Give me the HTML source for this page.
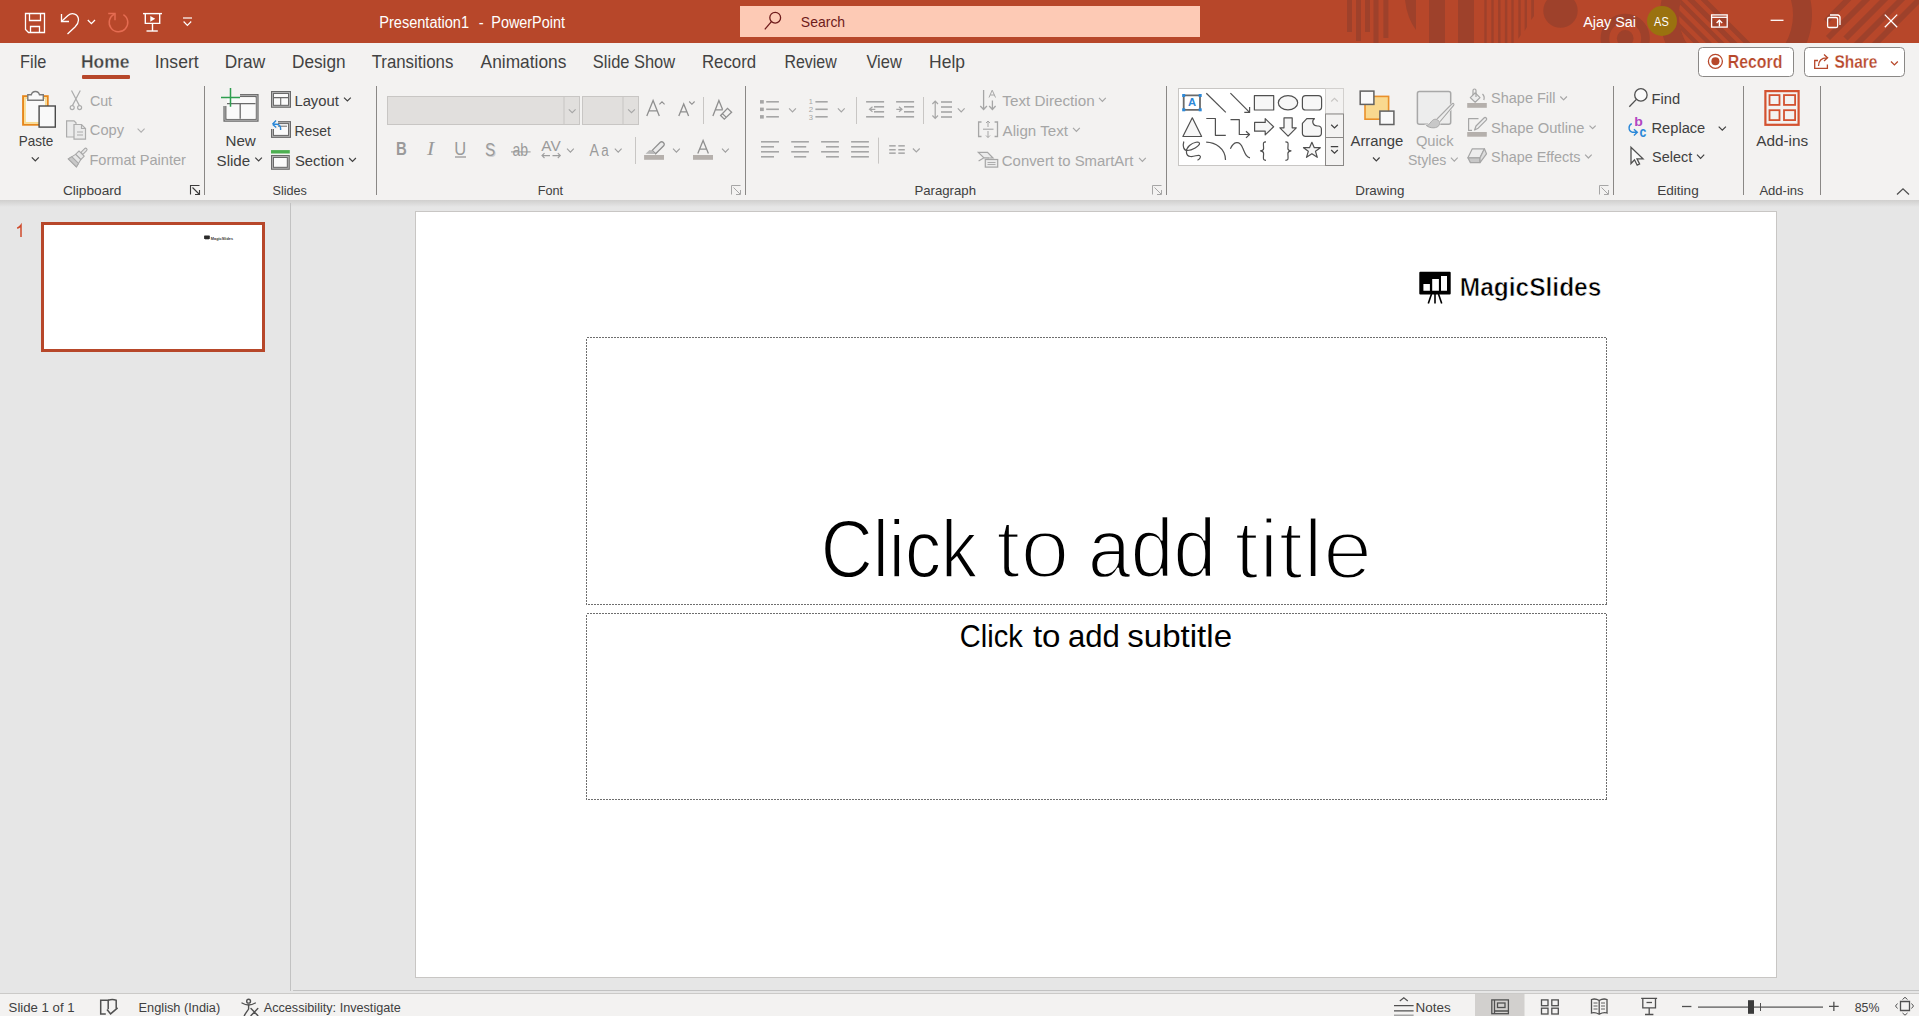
<!DOCTYPE html>
<html><head><meta charset="utf-8"><style>
html,body{margin:0;padding:0;width:1919px;height:1016px;overflow:hidden;background:#E6E6E6;}
body{position:relative;font-family:'Liberation Sans',sans-serif;}
.b{position:absolute;}
svg.ov{position:absolute;left:0;top:0;}
svg.ov text{white-space:pre;}
</style></head><body>
<div class="b" style="left:0;top:0;width:1919px;height:43px;background:#B7472A"></div>
<div class="b" style="left:0;top:43px;width:1919px;height:157px;background:#F3F2F1"></div>
<div class="b" style="left:0;top:200px;width:1919px;height:7px;background:linear-gradient(#D0CFCE,#E6E6E6)"></div>
<div class="b" style="left:290px;top:203px;width:1px;height:788px;background:#C2C2C2"></div>
<div class="b" style="left:293px;top:990px;width:1626px;height:1px;background:#C2C2C2"></div>
<div class="b" style="left:0;top:993px;width:1919px;height:1px;background:#CBCAC8"></div>
<div class="b" style="left:0;top:994px;width:1919px;height:22px;background:#F3F2F1"></div>
<div class="b" style="left:415px;top:211px;width:1360px;height:765px;background:#fff;border:1px solid #C8C6C4"></div>
<div class="b" style="left:41px;top:222px;width:218px;height:124px;background:#fff;border:3px solid #B7472A"></div>
<div class="b" style="left:82px;top:75px;width:48px;height:4px;background:#B7472A;border-radius:1px"></div>

<svg class="ov" width="1919" height="1016" viewBox="0 0 1919 1016">
<defs>
<clipPath id="tbclip"><rect x="0" y="0" width="1919" height="43"/></clipPath>
<clipPath id="ringin"><circle cx="1736" cy="15" r="57"/></clipPath>
</defs>
<g clip-path="url(#tbclip)" fill="#9E412B">
<rect x="1347" y="0" width="5" height="32"/>
<rect x="1356" y="0" width="5" height="41"/>
<rect x="1365" y="0" width="5" height="32"/>
<rect x="1373.5" y="0" width="5" height="43"/>
<rect x="1383.4" y="0" width="5" height="38"/>
<path d="M1405,0 Q1407,18 1416,30 L1416,0 Z"/>
<rect x="1429" y="0" width="16" height="43"/>
<rect x="1458" y="0" width="16" height="43"/>
<rect x="1484.3" y="0" width="2.4" height="43"/>
<rect x="1491.3" y="0" width="2.4" height="43"/>
<rect x="1498.1" y="0" width="2.4" height="43"/>
<rect x="1504.9" y="0" width="2.4" height="43"/>
<rect x="1511.3" y="0" width="2.4" height="43"/>
<path d="M1518.3,0 h2.4 v35 l-2.4,4 Z"/>
<path d="M1524.6,0 h2.4 v27 l-2.4,4 Z"/>
<path d="M1531.2,0 h2.8 v16 l-2.8,4 Z"/>
<circle cx="1560.5" cy="10.6" r="17.2"/>
<path fill-rule="evenodd" d="M1625.2,13.7 a24.6,24.6 0 1,0 0.01,0 Z M1625.2,22.3 a16,16 0 1,0 0.01,0 Z"/>
<circle cx="1625.2" cy="38.3" r="8.3"/>
<path fill-rule="evenodd" d="M1736,-61 a76,76 0 1,0 0.01,0 Z M1736,-42 a57,57 0 1,0 0.01,0 Z"/>
<g clip-path="url(#ringin)">
<polygon points="1600,-10 1697.5,-10 1760.5,53 1600,53"/>
<g fill="#B7472A">
<polygon points="1684.5,-10 1690.7,-10 1753.7,53 1747.5,53"/>
<polygon points="1671.5,-10 1677.2,-10 1740.2,53 1734.5,53"/>
<polygon points="1659,-10 1665.5,-10 1728.5,53 1722,53"/>
<polygon points="1646.5,-10 1653,-10 1716,53 1709.5,53"/>
<polygon points="1634,-10 1640.5,-10 1703.5,53 1697,53"/>
</g></g>
<g stroke="#9E412B" stroke-width="5.8" fill="none">
<line x1="1826" y1="21.4" x2="1849.4" y2="-2"/>
<line x1="1828" y1="38" x2="1868" y2="-2"/>
<line x1="1845.5" y1="38.5" x2="1886" y2="-2"/>
<line x1="1855" y1="46" x2="1903" y2="-2"/>
<line x1="1873" y1="46" x2="1921" y2="-2"/>
</g>
</g>
<!-- avatar -->
<circle cx="1662" cy="21" r="15" fill="#9A720F"/>
<!-- search box -->
<rect x="740" y="6" width="460" height="31" fill="#FDCAB5"/>
<g stroke="#6E1B1B" stroke-width="1.3" fill="none">
<circle cx="775.2" cy="17.7" r="5.4"/>
<line x1="771.4" y1="21.6" x2="764.8" y2="29.4"/>
</g>
<!-- QAT -->
<g stroke="#fff" stroke-width="1.3" fill="none">
<path d="M25.5,13.5 H44.5 V32.5 H28.5 L25.5,29.5 Z"/>
<path d="M29.5,13.5 V20.5 H40.5 V13.5"/>
<path d="M30.5,32.5 V26.5 H39.5 V32.5"/>
<path d="M61.5,14 V21.5 H69"/>
<path d="M62,21 L68,15.5 C72,12 78.5,14 78.5,20 C78.5,23 77,25 75,27 L67.5,34"/>
<path d="M87.8,20 L91.4,23.6 L95,20"/>
</g>
<g stroke="#E56C52" stroke-width="1.5" fill="none">
<path d="M123.4,14.6 A9.3,9.3 0 1 1 114.3,14.2"/>
<path d="M108.2,13.6 H115 V20.3"/>
</g>
<g stroke="#fff" stroke-width="1.4" fill="none">
<path d="M143,13.6 H162"/>
<path d="M145.3,13.6 V23.4 H159.7 V13.6"/>
<path d="M152.5,23.4 V31"/>
<path d="M146.5,31 H157.8"/>
</g>
<path d="M150.3,15.9 L155.2,18.8 L150.3,21.7 Z" fill="#fff"/>
<g stroke="#fff" stroke-width="1.2" fill="none">
<path d="M183,18 H192"/>
<path d="M183.6,21.5 L187.4,25.3 L191.2,21.5"/>
</g>
<!-- window controls -->
<g stroke="#fff" stroke-width="1.3" fill="none">
<rect x="1711.6" y="14.9" width="15.6" height="12.2"/>
<path d="M1712,17.3 H1727"/>
<path d="M1719.4,26.5 V20.5 M1716.6,23 L1719.4,20.2 L1722.2,23"/>
<path d="M1770.6,20.3 H1783.5"/>
<rect x="1827.6" y="17.5" width="10" height="10" rx="1.6"/>
<path d="M1830,15 H1837.5 A2.4,2.4 0 0 1 1840,17.5 V25"/>
<path d="M1884.8,14.6 L1897.2,27.2 M1897.2,14.6 L1884.8,27.2"/>
</g>
<!-- separators -->
<g fill="#8A8886">
<rect x="204" y="86" width="1" height="109"/>
<rect x="376" y="86" width="1" height="109"/>
<rect x="745" y="86" width="1" height="109"/>
<rect x="1166" y="86" width="1" height="109"/>
<rect x="1613" y="86" width="1" height="109"/>
<rect x="1743" y="86" width="1" height="109"/>
<rect x="1820" y="86" width="1" height="109"/>
</g>
<!-- Paste -->
<rect x="23.1" y="96.2" width="24.6" height="28.5" fill="#F9F9F9" stroke="#E6871C" stroke-width="2"/>
<rect x="25" y="98.1" width="20.8" height="24.7" fill="none" stroke="#F9DC8E" stroke-width="1.7"/>
<path d="M27.8,100.2 V94.8 H31.3 A4.2,4.2 0 0 1 39.5,94.8 H43.3 V100.2 Z" fill="#F9F9F9" stroke="#7A7A7A" stroke-width="1.4"/>
<rect x="39.1" y="106" width="16.2" height="21.1" fill="#F9F9F9" stroke="#4A4A4A" stroke-width="1.4"/>
<path d="M31.8,157.4 L35.3,160.9 L38.8,157.4" stroke="#404040" stroke-width="1.3" fill="none"/>
<!-- Cut -->
<g stroke="#ACACAC" stroke-width="1.2" fill="none">
<path d="M71.5,90.5 L79.4,105.6 M80.3,90.5 L72.4,105.6"/>
<circle cx="72.2" cy="107.6" r="2"/>
<circle cx="79.6" cy="107.6" r="2"/>
</g>
<!-- Copy -->
<g stroke="#ACACAC" stroke-width="1.2" fill="#EBEBEB">
<path d="M66.6,137 V120.8 H74 L76,122.8 V137 Z"/>
<path d="M74,139.1 V124.5 H81.5 L85.5,128.5 V139.1 Z"/>
<path d="M81.5,124.5 V128.5 H85.5" fill="none"/>
<path d="M77,132 H83 M77,135 H83" fill="none"/>
</g>
<!-- Format painter -->
<g transform="translate(77.6,157.6) rotate(45) scale(0.88)" stroke="#A8A8A8" stroke-width="1.2" fill="#E6E6E6" stroke-linejoin="round">
<rect x="-1.6" y="-14.5" width="3.2" height="8" rx="1.6"/>
<rect x="-4.2" y="-6.5" width="8.4" height="5.5"/>
<path d="M-4.2,-1 H4.2 L6.5,8.5 H-6.5 Z"/>
<path d="M-5.4,4 H5.4 L6.5,8.5 H-6.5 Z" fill="#C8C8C8"/>
</g>
<!-- launcher icons -->
<g stroke="#3B3B3B" stroke-width="1.1" fill="none">
<path d="M190.5,194.5 V185.5 H199.5 M192.5,187.5 L199,194 M199.5,190 V194.5 H195"/>
</g>
<g stroke="#A6A6A6" stroke-width="1" fill="none">
<path d="M731.5,194.5 V185.5 H740.5 M733.5,187.5 L740,194 M740.5,190 V194.5 H736"/>
<path d="M1152.5,194.5 V185.5 H1161.5 M1154.5,187.5 L1161,194 M1161.5,190 V194.5 H1157"/>
<path d="M1599.5,194.5 V185.5 H1608.5 M1601.5,187.5 L1608,194 M1608.5,190 V194.5 H1604"/>
</g>
<!-- New slide -->
<g fill="none">
<path d="M240,95.4 H257.1 V120.3 H224.9 V106" stroke="#6A6A6A" stroke-width="3"/>
<path d="M240,95.4 H257.1 V120.3 H224.9 V106" stroke="#B0B0B0" stroke-width="1"/>
<rect x="227" y="98" width="28.5" height="20.8" fill="#FAFAFA" stroke="none"/>
<path d="M227,103.6 H255.5 M240.2,103.6 V118.8" stroke="#6A6A6A" stroke-width="1.3"/>
<path d="M221,97.4 H240 M230.5,88.1 V106.7" stroke="#2E9E4F" stroke-width="1.5"/>
</g>
<path d="M255.3,157.7 L258.6,161 L261.9,157.7" stroke="#404040" stroke-width="1.2" fill="none"/>
<!-- Layout -->
<g fill="none">
<rect x="272.5" y="92.5" width="17" height="13.8" stroke="#6A6A6A" stroke-width="3" fill="#FAFAFA"/>
<rect x="272.5" y="92.5" width="17" height="13.8" stroke="#B0B0B0" stroke-width="1"/>
<path d="M274,97.6 H288 M280.7,97.6 V105" stroke="#6A6A6A" stroke-width="1.1"/>
</g>
<path d="M344,97.6 L347.4,101 L350.8,97.6" stroke="#404040" stroke-width="1.2" fill="none"/>
<!-- Reset -->
<g fill="none">
<rect x="272.5" y="122.6" width="17" height="13.8" stroke="#6A6A6A" stroke-width="3" fill="#FAFAFA"/>
<rect x="272.5" y="122.6" width="17" height="13.8" stroke="#B0B0B0" stroke-width="1"/>
<path d="M278,126.2 H287" stroke="#6A6A6A" stroke-width="1"/>
<rect x="270" y="120" width="8" height="9" fill="#F3F2F1" stroke="none"/>
<path d="M272.5,124.3 L276,120.6 M272.5,124.3 L276.2,127.5 M272.8,124.3 H276.5 A4,4 0 0 1 280.6,128.5 V130" stroke="#2B88D8" stroke-width="1.4"/>
</g>
<!-- Section -->
<rect x="271" y="150.1" width="18.8" height="3.4" fill="#4CAF50"/>
<rect x="272.5" y="156.5" width="15.8" height="11.8" stroke="#6A6A6A" stroke-width="3" fill="#FAFAFA"/>
<rect x="272.5" y="156.5" width="15.8" height="11.8" stroke="#B0B0B0" stroke-width="1" fill="none"/>
<path d="M349.1,158 L352.5,161.4 L355.9,158" stroke="#404040" stroke-width="1.2" fill="none"/>
<path d="M137.6,128.6 L141.1,132.1 L144.6,128.6" stroke="#B0B0B0" stroke-width="1.1" fill="none"/>
<!-- Font name/size boxes -->
<rect x="387.5" y="96.5" width="192" height="28" fill="#E1DFDD" stroke="#C8C6C4" stroke-width="1"/>
<rect x="563.5" y="97" width="1" height="27" fill="#C8C6C4"/>
<rect x="582.5" y="96.5" width="56" height="28" fill="#E1DFDD" stroke="#C8C6C4" stroke-width="1"/>
<rect x="622.5" y="97" width="1" height="27" fill="#C8C6C4"/>
<g stroke="#A6A6A6" stroke-width="1.1" fill="none">
<path d="M568.8,109.3 L572.2,112.7 L575.6,109.3"/>
<path d="M628.1,109.3 L631.5,112.7 L634.9,109.3"/>
</g>
<g stroke="#8F8F8F" stroke-width="1.3" fill="none" stroke-linejoin="miter">
<path d="M646.8,116 L653.1,100.5 L659.3,116 M648.8,110.8 H657.3"/>
<path d="M659.4,104.4 L662,101.8 L664.6,104.4" stroke-width="1.1"/>
<path d="M678.8,116 L683.7,103.9 L688.6,116 M680.5,111.8 H687"/>
<path d="M689.2,101.5 L691.9,104.3 L694.6,101.5" stroke-width="1.1"/>
<path d="M712.9,116 L718.9,100.5 L722.6,109.5 M715.3,109.8 H722.8"/>
<path d="M720.6,115.5 L727.5,108.4 L731.6,112.3 L724.3,119.2 Z M722.4,113.6 L726.3,117.4"/>
</g>
<rect x="703" y="97" width="1" height="27" fill="#C8C6C4"/>
<rect x="635" y="137" width="1" height="27" fill="#C8C6C4"/>
<!-- strike / AV / Aa details -->
<g stroke="#9E9E9E" stroke-width="1.1" fill="none">
<path d="M455,157 H466" stroke-width="1.4"/>
<path d="M511,151.9 H530.6"/>
<path d="M542,155.6 H550 M544.5,153.2 L542,155.6 L544.5,158 M552.5,155.6 H560.3 M557.8,153.2 L560.3,155.6 L557.8,158"/>
<path d="M567,148.7 L570.4,152.1 L573.8,148.7"/>
<path d="M614.8,148.7 L618.2,152.1 L621.6,148.7"/>
</g>
<!-- highlighter & font color -->
<g stroke="#8F8F8F" stroke-width="1.3" fill="#EBEBEB">
<path d="M652.2,150.4 L660.3,142.3 A1.9,1.9 0 0 1 663,142.3 L663.7,143 A1.9,1.9 0 0 1 663.7,145.7 L655.6,153.8 Z"/>
</g>
<path d="M645.5,153.8 L649.5,150 L652.3,150.5 L655.3,153.5 L654.5,153.9 Z" fill="#B8B8B8"/>
<rect x="644.1" y="155" width="19.9" height="4.8" fill="#B5B0AC"/>
<g stroke="#8F8F8F" stroke-width="1.3" fill="none">
<path d="M697.8,153.6 L703.1,140.5 L708.4,153.6 M699.6,149.1 H706.6"/>
</g>
<rect x="693" y="155" width="20" height="4.8" fill="#B5B0AC"/>
<g stroke="#9E9E9E" stroke-width="1.1" fill="none">
<path d="M673,148.7 L676.4,152.1 L679.8,148.7"/>
<path d="M722,148.7 L725.4,152.1 L728.8,148.7"/>
</g>
<!-- Paragraph -->
<g fill="#A6A6A6">
<rect x="760" y="100.1" width="3.8" height="3.5"/>
<rect x="760" y="107.6" width="3.8" height="3.5"/>
<rect x="760" y="115.1" width="3.8" height="3.5"/>
<rect x="766.2" y="101" width="12.7" height="1.6"/>
<rect x="766.2" y="108.5" width="12.7" height="1.6"/>
<rect x="766.2" y="116" width="12.7" height="1.6"/>
<rect x="815.4" y="101" width="12.3" height="1.6"/>
<rect x="815.4" y="108.5" width="12.3" height="1.6"/>
<rect x="815.4" y="116" width="12.3" height="1.6"/>
<!-- indents -->
<rect x="866.1" y="101" width="18" height="1.6"/>
<rect x="874" y="106" width="10.1" height="1.6"/>
<rect x="874" y="111" width="10.1" height="1.6"/>
<rect x="866.1" y="116" width="18" height="1.6"/>
<rect x="896.1" y="101" width="18" height="1.6"/>
<rect x="904" y="106" width="10.1" height="1.6"/>
<rect x="904" y="111" width="10.1" height="1.6"/>
<rect x="896.1" y="116" width="18" height="1.6"/>
<!-- line spacing lines -->
<rect x="941" y="101.2" width="11" height="1.6"/>
<rect x="941" y="106.2" width="11" height="1.6"/>
<rect x="941" y="111.2" width="11" height="1.6"/>
<rect x="941" y="116.2" width="11" height="1.6"/>
<!-- align rows -->
<rect x="761" y="141" width="18" height="1.6"/><rect x="761" y="146" width="13" height="1.6"/><rect x="761" y="151" width="18" height="1.6"/><rect x="761" y="156" width="13" height="1.6"/>
<rect x="791.2" y="141" width="17.7" height="1.6"/><rect x="794" y="146" width="12.2" height="1.6"/><rect x="791.2" y="151" width="17.7" height="1.6"/><rect x="794" y="156" width="12.2" height="1.6"/>
<rect x="821.1" y="141" width="17.8" height="1.6"/><rect x="826" y="146" width="12.9" height="1.6"/><rect x="821.1" y="151" width="17.8" height="1.6"/><rect x="826" y="156" width="12.9" height="1.6"/>
<rect x="851.1" y="141" width="17.8" height="1.6"/><rect x="851.1" y="146" width="17.8" height="1.6"/><rect x="851.1" y="151" width="17.8" height="1.6"/><rect x="851.1" y="156" width="17.8" height="1.6"/>
<!-- columns -->
<rect x="889.2" y="145.1" width="6.5" height="1.5"/><rect x="889.2" y="149" width="6.5" height="1.5"/><rect x="889.2" y="152.4" width="6.5" height="1.5"/>
<rect x="898.3" y="145.1" width="6.5" height="1.5"/><rect x="898.3" y="149" width="6.5" height="1.5"/><rect x="898.3" y="152.4" width="6.5" height="1.5"/>
</g>
<g fill="#C8C6C4">
<rect x="856" y="97" width="1" height="27"/>
<rect x="923" y="97" width="1" height="27"/>
<rect x="878" y="137.6" width="1" height="26"/>
</g>
<g stroke="#A6A6A6" stroke-width="1.2" fill="none">
<path d="M789.1,108.4 L792.5,111.8 L795.9,108.4"/>
<path d="M837.9,108.4 L841.3,111.8 L844.7,108.4"/>
<path d="M957.8,108.4 L961.2,111.8 L964.6,108.4"/>
<path d="M912.9,148.5 L916.3,151.9 L919.7,148.5"/>
<path d="M872.5,106.8 L869.5,109.3 L872.5,111.8 M869.7,109.3 H875.3"/>
<path d="M899,106.8 L902,109.3 L899,111.8 M896.3,109.3 H901.8"/>
<path d="M935.2,101.5 V118 M932.4,104 L935.2,101.2 L938,104 M932.4,115.5 L935.2,118.3 L938,115.5"/>
<path d="M1099,97.9 L1102.4,101.3 L1105.8,97.9"/>
<path d="M1073,127.9 L1076.4,131.3 L1079.8,127.9"/>
<path d="M1139,157.9 L1142.4,161.3 L1145.8,157.9"/>
</g>
<!-- text direction icon -->
<g stroke="#A6A6A6" stroke-width="1.3" fill="none">
<path d="M983.6,90 V109.5 M980.3,106 L983.6,109.5 L986.9,106"/>
<path d="M992.4,100.5 V109.5 M989.2,106 L992.4,109.5 L995.6,106"/>
<path d="M989,97.5 L992.2,90.2 L995.5,97.5 M990.3,95 H994.3" stroke-width="1"/>
</g>
<!-- align text icon -->
<g stroke="#A6A6A6" stroke-width="1.3" fill="none">
<path d="M981.5,122 H978.6 V136.5 H981.5 M994.6,122 H997.5 V136.5 H994.6"/>
<path d="M983,129.2 H993.5" stroke-width="1.1"/>
<path d="M988,121 V127 M986,123 L988,121 L990,123 M988,131 V137.5 M986,135.5 L988,137.5 L990,135.5" stroke-width="1"/>
</g>
<!-- smartart icon -->
<g stroke="#A6A6A6" stroke-width="1.2" fill="#EBEBEB">
<path d="M978.3,152.3 H987.5 L993,158 H984 Z"/>
<path d="M978.6,161 L983.5,158 H989"/>
<rect x="985.3" y="159.5" width="12.4" height="7.6"/>
<path d="M987.5,162.5 H995.5 M987.5,164.5 H995.5" fill="none" stroke-width="0.9"/>
</g>
<!-- shape gallery -->
<rect x="1178.5" y="88.5" width="147" height="77" fill="#FFFFFF" stroke="#C8C6C4" stroke-width="1"/>
<rect x="1325.5" y="88.5" width="18" height="25.5" fill="#F3F2F1" stroke="#D2D0CE" stroke-width="1"/>
<rect x="1325.5" y="114" width="18" height="23.5" fill="#F3F2F1" stroke="#8A8886" stroke-width="1"/>
<rect x="1325.5" y="137.5" width="18" height="28" fill="#F3F2F1" stroke="#8A8886" stroke-width="1"/>
<g stroke="#C8C6C4" stroke-width="1.1" fill="none"><path d="M1331.2,101.5 L1334.5,98.3 L1337.8,101.5"/></g>
<g stroke="#404040" stroke-width="1.2" fill="none">
<path d="M1331.2,124.8 L1334.5,128 L1337.8,124.8"/>
<path d="M1330.8,146.6 H1338.2 M1331.2,150 L1334.5,153.2 L1337.8,150"/>
</g>
<g stroke="#505050" stroke-width="1.2" fill="none" stroke-linejoin="round">
<!-- row1 -->
<rect x="1183.7" y="95.3" width="16.3" height="14.5" stroke="#6A6A6A" stroke-width="1.8"/>
<path d="M1206.3,93.2 L1225.8,112.4"/>
<path d="M1230.4,93.2 L1249.6,112.4 M1249.6,107 V112.4 H1244.3"/>
<rect x="1254.4" y="95.7" width="19.3" height="14.3" fill="#F7F7F7"/>
<ellipse cx="1288" cy="102.8" rx="9.7" ry="7.1" fill="#F7F7F7"/>
<rect x="1302.4" y="95.7" width="19.2" height="14.3" rx="3.3" fill="#F7F7F7"/>
<!-- row2 -->
<path d="M1182.9,136.5 L1192.3,117.8 L1201.6,136.5 Z" fill="#F7F7F7"/>
<path d="M1206.3,118.5 H1215.4 V135.3 H1225.8"/>
<path d="M1230.5,119.6 H1239.3 V134.5 H1249.5 M1246,131.2 L1249.5,134.5 L1246,137.9"/>
<path d="M1254.6,122.4 H1265.2 V118.6 L1273.6,126.8 L1265.2,134.9 V131.2 H1254.6 Z" fill="#F7F7F7"/>
<path d="M1284,117.9 H1292.2 V127.8 H1296.3 L1288.1,136.2 L1279.9,127.8 H1284 Z" fill="#F7F7F7"/>
<path d="M1302.4,123.4 L1306.8,118.7 H1314.4 C1311.5,120.7 1312.5,126 1317.5,126 H1318.3 A3,3 0 0 1 1321.4,129 V133.3 A3,3 0 0 1 1318.3,136.4 H1305.5 A3,3 0 0 1 1302.4,133.3 Z" fill="#F7F7F7"/>
<!-- row3 -->
<path d="M1183.8,141.5 C1182.5,146 1183.5,150.5 1187.5,150.5 C1192,150.5 1199.5,146 1199.5,143.5 C1199.5,141 1193.5,142 1189.5,145.5 C1185.5,149 1185,156 1190.5,156.5 C1194.5,157 1197.5,154.5 1199.5,155.5 C1201.5,156.5 1200,159 1197.5,160.3"/>
<path d="M1206.2,142.2 C1215,142.5 1225.5,148 1225.5,160"/>
<path d="M1230.4,148.8 C1233.5,141.5 1239.5,140 1242.7,148 C1245.3,154 1246.5,157.5 1250,157.8"/>
<path d="M1266,141.9 C1262.3,141.9 1263.6,144 1263.6,148.5 C1263.6,150.4 1262.3,150.7 1260.5,150.9 C1262.3,151.2 1263.6,151.5 1263.6,153.4 C1263.6,158 1262.3,160.3 1266,160.3"/>
<path d="M1285.4,141.9 C1289.2,141.9 1287.9,144 1287.9,148.5 C1287.9,150.4 1289.2,150.7 1291,150.9 C1289.2,151.2 1287.9,151.5 1287.9,153.4 C1287.9,158 1289.2,160.3 1285.4,160.3"/>
<path d="M1311.9,142.3 L1314.3,147.7 L1320.3,147.7 L1315.5,151.3 L1317.3,157.3 L1311.9,153.7 L1306.5,157.3 L1308.3,151.3 L1303.5,147.7 L1309.5,147.7 Z" fill="#F7F7F7"/>
</g>
<g fill="#2B88D8">
<rect x="1182.2" y="94" width="3" height="3"/>
<rect x="1198.7" y="94" width="3" height="3"/>
<rect x="1182.2" y="108.3" width="3" height="3"/>
<rect x="1198.7" y="108.3" width="3" height="3"/>
</g>
<!-- Arrange -->
<rect x="1365" y="96.4" width="23.6" height="22.8" fill="#F9D98F" stroke="#E9902A" stroke-width="1.6"/>
<rect x="1360.2" y="91.1" width="13.7" height="13.3" fill="#F9F9F9" stroke="#626262" stroke-width="1.5"/>
<rect x="1379.9" y="111.1" width="14" height="13.4" fill="#F9F9F9" stroke="#626262" stroke-width="1.5"/>
<path d="M1373,157.5 L1376.3,160.8 L1379.6,157.5" stroke="#404040" stroke-width="1.2" fill="none"/>
<!-- Quick styles -->
<rect x="1417.4" y="91.4" width="33.3" height="32.9" rx="2" fill="#EDEDED" stroke="#A8A8A8" stroke-width="1.5"/>
<path d="M1436.5,119.5 L1451.8,104 C1453.3,102.8 1454.6,103.6 1453.6,105.4 L1439.5,122.3 Z" fill="#EDEDED" stroke="#F3F2F1" stroke-width="2.2"/>
<path d="M1436.5,119.5 L1451.8,104 C1453.3,102.8 1454.6,103.6 1453.6,105.4 L1439.5,122.3 Z" fill="#EDEDED" stroke="#A8A8A8" stroke-width="1.1"/>
<path d="M1426.3,125.5 C1429.5,125.2 1430.5,122 1432.5,120.3 C1434.5,118.5 1437.5,119 1439.3,121.5 C1440.5,124.5 1438.5,127.5 1434,127.8 C1431,128 1428,127 1426.3,125.5 Z" fill="#C8C8C8" stroke="#F3F2F1" stroke-width="1.8"/>
<path d="M1426.3,125.5 C1429.5,125.2 1430.5,122 1432.5,120.3 C1434.5,118.5 1437.5,119 1439.3,121.5 C1440.5,124.5 1438.5,127.5 1434,127.8 C1431,128 1428,127 1426.3,125.5 Z" fill="#C8C8C8" stroke="#A8A8A8" stroke-width="1"/>
<path d="M1450.9,157.7 L1454.3,161.1 L1457.7,157.7" stroke="#A6A6A6" stroke-width="1.1" fill="none"/>
<!-- shape fill/outline/effects -->
<g stroke="#A6A6A6" stroke-width="1.2" fill="none" stroke-linejoin="round">
<path d="M1470.3,97.6 L1475.3,92.8 L1480,97.6 L1475.2,102.2 Z" fill="#EDEDED"/>
<path d="M1473,95 V90.5 A1.5,1.5 0 0 1 1476,90.5 V97"/>
<path d="M1482.5,94 C1484,95.5 1484.5,98 1483.8,100"/>
<path d="M1478.5,118.6 H1468.6 V130.4 H1472"/>
<path d="M1474.6,130 L1476,126 L1484,118 A1.5,1.5 0 0 1 1486.2,120.2 L1478.2,128.2 Z" fill="#EDEDED"/>
<path d="M1467.9,157.8 L1472.3,148.8 H1484.4 L1480,157.8 Z" fill="#EDEDED"/>
<path d="M1467.9,157.8 L1470.4,162.6 H1480 V157.8 Z" fill="#C8C8C8"/>
<path d="M1480,157.8 L1484.4,148.8 L1486.5,153.8 L1480,162.6 Z" fill="#DCDCDC"/>
<path d="M1560.3,96.5 L1563.6,99.8 L1566.9,96.5"/>
<path d="M1589.5,125.6 L1592.6,128.7 L1595.7,125.6"/>
<path d="M1585.1,154.7 L1588.4,158 L1591.7,154.7"/>
</g>
<rect x="1467.2" y="103" width="19.6" height="4.8" fill="#B5B0AC"/>
<rect x="1467.2" y="132" width="19.6" height="4.7" fill="#B5B0AC"/>
<!-- Editing -->
<g stroke="#505050" stroke-width="1.3" fill="none">
<circle cx="1640.9" cy="94.9" r="6.2" fill="#FAFAFA"/>
<path d="M1636.4,99.4 L1629.3,106.8"/>
<path d="M1631,147.3 V163.5 L1634.5,159.8 L1637.2,165.2 L1639.6,164 L1637,158.8 H1643 Z" stroke-linejoin="miter" fill="#FAFAFA"/>
<path d="M1718.7,126.6 L1722.3,130.2 L1725.9,126.6" stroke="#404040" stroke-width="1.2"/>
<path d="M1697,154.7 L1700.6,158.3 L1704.2,154.7" stroke="#404040" stroke-width="1.2"/>
</g>
<g stroke="#2B88D8" stroke-width="1.4" fill="none">
<path d="M1631.8,123.6 C1628.3,125 1627.8,131 1632.5,132.3 H1637.2 M1633.9,129.2 L1637.3,132.3 L1633.9,135.4"/>
</g>
<!-- Add-ins icon -->
<g stroke="#D35230" fill="none">
<rect x="1765.4" y="91.1" width="33.2" height="33.7" stroke-width="2.2"/>
<g stroke-width="1.8">
<rect x="1769.5" y="95.1" width="10" height="9.8"/>
<rect x="1784" y="95.1" width="11.1" height="9.8"/>
<rect x="1769.5" y="110.2" width="10" height="9.9"/>
<rect x="1784" y="110.2" width="11.1" height="9.9"/>
</g></g>
<path d="M1897,194.5 L1903,188.8 L1909,194.5" stroke="#505050" stroke-width="1.3" fill="none"/>
<!-- Record / Share buttons -->
<rect x="1698.5" y="47.5" width="95" height="29" rx="4" fill="#FFFFFF" stroke="#8A8886" stroke-width="1"/>
<rect x="1804.5" y="47.5" width="100" height="29" rx="4" fill="#FFFFFF" stroke="#8A8886" stroke-width="1"/>
<circle cx="1715.4" cy="61.3" r="7" fill="none" stroke="#B7472A" stroke-width="1.3"/>
<circle cx="1715.4" cy="61.3" r="4" fill="#B7472A"/>
<g stroke="#B7472A" stroke-width="1.3" fill="none">
<path d="M1818,60.5 H1814.7 V68.4 H1827.4 V64.5"/>
<path d="M1818.5,66 C1818.5,61 1821.5,57.8 1826.5,57.8 M1824,54.6 L1827.6,57.8 L1824,61"/>
<path d="M1891,61.5 L1894.4,64.9 L1897.8,61.5"/>
</g>
<!-- slide placeholders -->
<g fill="none" stroke="#6E6E6E" stroke-width="1" stroke-dasharray="2 1" shape-rendering="crispEdges">
<rect x="586.5" y="337.5" width="1020" height="267"/>
<rect x="586.5" y="613.5" width="1020" height="186"/>
</g>
<!-- MagicSlides logo -->
<path fill="#000" fill-rule="evenodd" d="M1420.3,271.7 H1449.7 A1,1 0 0 1 1450.7,272.7 V293.4 A1,1 0 0 1 1449.7,294.4 H1420.3 A1,1 0 0 1 1419.3,293.4 V272.7 A1,1 0 0 1 1420.3,271.7 Z M1423.4,283.9 V290.7 H1429.9 V283.9 Z M1432.2,279.1 V290.7 H1438.9 V279.1 Z M1441,276 V290.7 H1447 V276 Z"/>
<g stroke="#000" stroke-width="1.6" fill="none">
<path d="M1431.5,294 L1428.3,303.5 M1435,294 V303.5 M1438.5,294 L1441.7,303.5"/>
</g>
<!-- thumbnail logo -->
<rect x="204.1" y="235.6" width="5.7" height="3.4" rx="0.6" fill="#2A2A2A"/>
<path d="M206,239 L205.6,240 M207,239 V240 M208,239 L208.4,240" stroke="#666" stroke-width="0.6"/>
<!-- status bar icons -->
<g stroke="#505050" stroke-width="1.5" fill="none" stroke-linejoin="miter">
<path d="M105.8,1013.9 H100.7 V1000.2 H108.2 V1009.3"/>
<path d="M108.2,1000.2 C111,999.3 113.5,999.3 116.2,1000.2 V1008.6"/>
<path d="M107,1009.6 L110.6,1013.9 L117.6,1007.9"/>
</g>
<g stroke="#505050" stroke-width="1.4" fill="none" stroke-linecap="round">
<circle cx="248.6" cy="1001.2" r="1.9"/>
<path d="M242,1003 C244.5,1004.5 246,1005 248.6,1005 C251.2,1005 252.7,1004.5 255.3,1003"/>
<path d="M248.6,1005 V1009 C247.5,1011 245.5,1013 244.3,1015.8"/>
<path d="M251,1008.6 L257.8,1015.6 M257.8,1008.6 L251,1015.6"/>
</g>
<!-- Notes icon -->
<g stroke="#505050" stroke-width="1.2" fill="none">
<path d="M1399.8,1001 L1403.8,997.8 L1407.8,1001"/>
<path d="M1394,1005.6 H1413.6 M1394,1010.8 H1413.6"/>
</g>
<rect x="1394" y="1014.5" width="19.6" height="1.5" fill="#A6A6A6"/>
<!-- view buttons -->
<rect x="1475" y="994" width="49.5" height="22" fill="#D2D0CE"/>
<g stroke="#505050" stroke-width="1.3" fill="none">
<rect x="1491.8" y="999.9" width="16.6" height="13.8"/>
<path d="M1494.5,1000 V1013.5 M1494.5,1011 H1508"/>
<rect x="1497.5" y="1003" width="7.5" height="4.5"/>
<rect x="1541.5" y="999.9" width="6.5" height="5.8"/>
<rect x="1551.8" y="999.9" width="6.5" height="5.8"/>
<rect x="1541.5" y="1008.2" width="6.5" height="5.8"/>
<rect x="1551.8" y="1008.2" width="6.5" height="5.8"/>
<path d="M1599.2,1000.5 C1596,998.5 1593,999 1591.5,999.5 V1013 C1593,1012.5 1596,1012.5 1599.2,1014.2 C1602.5,1012.5 1605.5,1012.5 1607,1013 V999.5 C1605.5,999 1602.5,998.5 1599.2,1000.5 Z M1599.2,1000.5 V1014"/>
<path d="M1593.5,1003 H1597.5 M1593.5,1006 H1597.5 M1593.5,1009 H1597.5 M1601,1003 H1605 M1601,1006 H1605 M1601,1009 H1605" stroke-width="0.9"/>
<path d="M1641.2,998.4 H1657.1 M1642.8,998.4 V1007.8 H1655.5 V998.4 M1649.2,1007.8 V1014.5 M1645,1014.5 H1653.4"/>
<path d="M1646.5,1002.5 H1652" />
<path d="M1682,1006.5 H1691.4"/>
<path d="M1829,1006.3 H1838.7 M1833.85,1001.7 V1010.9"/>
<path d="M1900.5,1001.5 V1010.5 H1909.5 V1001.5 Z" />
<path d="M1897.5,1003.5 L1895.5,1006 L1897.5,1008.5 M1911.5,1003.5 L1913.5,1006 L1911.5,1008.5 M1902.5,999.5 L1905,997.3 L1907.5,999.5 M1902.5,1013 L1905,1015.2 L1907.5,1013" stroke-width="1"/>
</g>
<rect x="1698" y="1006.5" width="125" height="1.2" fill="#505050"/>
<rect x="1748" y="1000.2" width="6" height="13.6" fill="#3B3B3B"/>
<rect x="1760" y="1003" width="1" height="8" fill="#505050"/>
<path d="M21,237 V225.2 C20,226.6 18.6,227.6 17.2,228.2" stroke="#CF4B2C" stroke-width="1.5" fill="none"/>

<text transform="translate(379.23,28) scale(0.9115,1)" font-size="15.99" font-family="Liberation Sans" font-weight="normal" fill="#fff">Presentation1</text>
<text transform="translate(478.74,28) scale(0.9190,1)" font-size="15.99" font-family="Liberation Sans" font-weight="normal" fill="#fff">-</text>
<text transform="translate(491.35,28) scale(0.8999,1)" font-size="15.99" font-family="Liberation Sans" font-weight="normal" fill="#fff">PowerPoint</text>
<text transform="translate(800.87,27) scale(0.9072,1)" font-size="15.41" font-family="Liberation Sans" font-weight="normal" fill="#6E1B1B">Search</text>
<text transform="translate(1583.20,27) scale(0.9339,1)" font-size="15.41" font-family="Liberation Sans" font-weight="normal" fill="#fff">Ajay Sai</text>
<text transform="translate(1654.10,26) scale(0.8388,1)" font-size="13.08" font-family="Liberation Sans" font-weight="normal" fill="#fff">AS</text>
<text transform="translate(20.10,68) scale(0.8969,1)" font-size="18.17" font-family="Liberation Sans" font-weight="normal" fill="#424242">File</text>
<text transform="translate(81.02,68) scale(0.9384,1)" font-size="18.60" font-family="Liberation Sans" font-weight="bold" fill="#424242" stroke="#F3F2F1" stroke-width="0.30">Home</text>
<text transform="translate(154.72,68) scale(0.9658,1)" font-size="18.17" font-family="Liberation Sans" font-weight="normal" fill="#424242">Insert</text>
<text transform="translate(224.82,68) scale(0.9519,1)" font-size="18.17" font-family="Liberation Sans" font-weight="normal" fill="#424242">Draw</text>
<text transform="translate(292.02,68) scale(0.9467,1)" font-size="18.17" font-family="Liberation Sans" font-weight="normal" fill="#424242">Design</text>
<text transform="translate(371.66,68) scale(0.9265,1)" font-size="18.17" font-family="Liberation Sans" font-weight="normal" fill="#424242">Transitions</text>
<text transform="translate(480.60,68) scale(0.9540,1)" font-size="18.17" font-family="Liberation Sans" font-weight="normal" fill="#424242">Animations</text>
<text transform="translate(592.86,68) scale(0.9055,1)" font-size="18.17" font-family="Liberation Sans" font-weight="normal" fill="#424242">Slide Show</text>
<text transform="translate(701.95,68) scale(0.9257,1)" font-size="18.17" font-family="Liberation Sans" font-weight="normal" fill="#424242">Record</text>
<text transform="translate(784.43,68) scale(0.8772,1)" font-size="18.17" font-family="Liberation Sans" font-weight="normal" fill="#424242">Review</text>
<text transform="translate(866.42,68) scale(0.9058,1)" font-size="18.17" font-family="Liberation Sans" font-weight="normal" fill="#424242">View</text>
<text transform="translate(929.10,68) scale(0.9614,1)" font-size="18.17" font-family="Liberation Sans" font-weight="normal" fill="#424242">Help</text>
<text transform="translate(1727.64,68) scale(0.8520,1)" font-size="18.68" font-family="Liberation Sans" font-weight="bold" fill="#B7472A" stroke="#fff" stroke-width="0.25">Record</text>
<text transform="translate(1834.41,68) scale(0.8292,1)" font-size="18.68" font-family="Liberation Sans" font-weight="bold" fill="#B7472A" stroke="#fff" stroke-width="0.25">Share</text>
<text transform="translate(18.72,146) scale(0.8929,1)" font-size="15.12" font-family="Liberation Sans" font-weight="normal" fill="#404040">Paste</text>
<text transform="translate(89.89,106) scale(0.9530,1)" font-size="14.97" font-family="Liberation Sans" font-weight="normal" fill="#A6A6A6">Cut</text>
<text transform="translate(89.87,135) scale(0.9670,1)" font-size="15.12" font-family="Liberation Sans" font-weight="normal" fill="#A6A6A6">Copy</text>
<text transform="translate(89.43,165) scale(0.9657,1)" font-size="15.12" font-family="Liberation Sans" font-weight="normal" fill="#A6A6A6">Format Painter</text>
<text transform="translate(62.92,195) scale(1.0234,1)" font-size="13.37" font-family="Liberation Sans" font-weight="normal" fill="#404040">Clipboard</text>
<text transform="translate(225.49,146) scale(1.0035,1)" font-size="15.12" font-family="Liberation Sans" font-weight="normal" fill="#404040">New</text>
<text transform="translate(216.62,166) scale(0.9977,1)" font-size="15.12" font-family="Liberation Sans" font-weight="normal" fill="#404040">Slide</text>
<text transform="translate(294.41,106) scale(0.9899,1)" font-size="14.97" font-family="Liberation Sans" font-weight="normal" fill="#404040">Layout</text>
<text transform="translate(294.49,136) scale(0.9196,1)" font-size="15.12" font-family="Liberation Sans" font-weight="normal" fill="#404040">Reset</text>
<text transform="translate(294.93,166) scale(0.9997,1)" font-size="14.83" font-family="Liberation Sans" font-weight="normal" fill="#404040">Section</text>
<text transform="translate(272.53,195) scale(0.9443,1)" font-size="13.37" font-family="Liberation Sans" font-weight="normal" fill="#404040">Slides</text>
<text transform="translate(537.68,195) scale(0.9489,1)" font-size="13.37" font-family="Liberation Sans" font-weight="normal" fill="#404040">Font</text>
<text transform="translate(914.44,195) scale(0.9866,1)" font-size="13.37" font-family="Liberation Sans" font-weight="normal" fill="#404040">Paragraph</text>
<text transform="translate(1002.29,106) scale(1.0010,1)" font-size="15.26" font-family="Liberation Sans" font-weight="normal" fill="#A6A6A6">Text Direction</text>
<text transform="translate(1002.60,136) scale(0.9742,1)" font-size="15.55" font-family="Liberation Sans" font-weight="normal" fill="#A6A6A6">Align Text</text>
<text transform="translate(1001.86,166) scale(0.9669,1)" font-size="15.41" font-family="Liberation Sans" font-weight="normal" fill="#A6A6A6">Convert to SmartArt</text>
<text transform="translate(1350.50,146) scale(1.0031,1)" font-size="14.83" font-family="Liberation Sans" font-weight="normal" fill="#404040">Arrange</text>
<text transform="translate(1415.94,146) scale(0.9916,1)" font-size="14.83" font-family="Liberation Sans" font-weight="normal" fill="#A6A6A6">Quick</text>
<text transform="translate(1407.97,165) scale(0.9580,1)" font-size="14.68" font-family="Liberation Sans" font-weight="normal" fill="#A6A6A6">Styles</text>
<text transform="translate(1491.05,103) scale(0.9771,1)" font-size="14.83" font-family="Liberation Sans" font-weight="normal" fill="#A6A6A6">Shape Fill</text>
<text transform="translate(1491.04,133) scale(0.9937,1)" font-size="14.83" font-family="Liberation Sans" font-weight="normal" fill="#A6A6A6">Shape Outline</text>
<text transform="translate(1491.05,162) scale(0.9716,1)" font-size="14.83" font-family="Liberation Sans" font-weight="normal" fill="#A6A6A6">Shape Effects</text>
<text transform="translate(1355.23,195) scale(1.0028,1)" font-size="13.37" font-family="Liberation Sans" font-weight="normal" fill="#404040">Drawing</text>
<text transform="translate(1651.52,104) scale(1.0029,1)" font-size="14.68" font-family="Liberation Sans" font-weight="normal" fill="#404040">Find</text>
<text transform="translate(1651.53,133) scale(0.9798,1)" font-size="14.97" font-family="Liberation Sans" font-weight="normal" fill="#404040">Replace</text>
<text transform="translate(1652.05,162) scale(0.9474,1)" font-size="15.26" font-family="Liberation Sans" font-weight="normal" fill="#404040">Select</text>
<text transform="translate(1657.21,195) scale(1.0151,1)" font-size="13.37" font-family="Liberation Sans" font-weight="normal" fill="#404040">Editing</text>
<text transform="translate(1756.20,146) scale(1.0456,1)" font-size="14.68" font-family="Liberation Sans" font-weight="normal" fill="#404040">Add-ins</text>
<text transform="translate(1759.40,195) scale(0.9763,1)" font-size="13.37" font-family="Liberation Sans" font-weight="normal" fill="#404040">Add-ins</text>
<text transform="translate(8.61,1012) scale(1.0089,1)" font-size="13.08" font-family="Liberation Sans" font-weight="normal" fill="#404040">Slide 1 of 1</text>
<text transform="translate(138.58,1012) scale(0.9773,1)" font-size="13.08" font-family="Liberation Sans" font-weight="normal" fill="#404040">English (India)</text>
<text transform="translate(263.70,1012) scale(0.9685,1)" font-size="13.08" font-family="Liberation Sans" font-weight="normal" fill="#404040">Accessibility: Investigate</text>
<text transform="translate(1415.62,1012) scale(1.0529,1)" font-size="12.79" font-family="Liberation Sans" font-weight="normal" fill="#404040">Notes</text>
<text transform="translate(1854.74,1012) scale(0.9875,1)" font-size="12.50" font-family="Liberation Sans" font-weight="normal" fill="#404040">85%</text>
<text transform="translate(820.72,577) scale(0.8767,1)" font-size="82.32" font-family="Liberation Sans" font-weight="normal" fill="#000" stroke="#fff" stroke-width="1.93">Click</text>
<text transform="translate(996.10,577) scale(1.0488,1)" font-size="83.82" font-family="Liberation Sans" font-weight="normal" fill="#000" stroke="#fff" stroke-width="2.97">to</text>
<text transform="translate(1088.10,577) scale(0.9264,1)" font-size="82.81" font-family="Liberation Sans" font-weight="normal" fill="#000" stroke="#fff" stroke-width="2.27">add</text>
<text transform="translate(1234.27,578) scale(1.0567,1)" font-size="83.88" font-family="Liberation Sans" font-weight="normal" fill="#000" stroke="#fff" stroke-width="3.01">title</text>
<text transform="translate(959.85,647) scale(0.9333,1)" font-size="31.10" font-family="Liberation Sans" font-weight="normal" fill="#000">Click</text>
<text transform="translate(1032.90,647) scale(1.0634,1)" font-size="31.10" font-family="Liberation Sans" font-weight="normal" fill="#000">to</text>
<text transform="translate(1067.96,647) scale(0.9995,1)" font-size="31.10" font-family="Liberation Sans" font-weight="normal" fill="#000">add</text>
<text transform="translate(1127.21,647) scale(1.0644,1)" font-size="31.10" font-family="Liberation Sans" font-weight="normal" fill="#000">subtitle</text>
<text transform="translate(1459.81,296) scale(0.9369,1)" font-size="26.16" font-family="Liberation Sans" font-weight="bold" fill="#000" stroke="#fff" stroke-width="0.60">MagicSlides</text>
<text transform="translate(395.93,155) scale(0.8211,1)" font-size="18.17" font-family="Liberation Sans" font-weight="bold" fill="#9A9A9A">B</text>
<text transform="translate(427.01,155) scale(1.1318,1)" font-size="19.08" font-family="Liberation Serif" font-style="italic" fill="#9A9A9A">I</text>
<text transform="translate(454.36,155) scale(0.9077,1)" font-size="18.17" font-family="Liberation Sans" font-weight="normal" fill="#9A9A9A">U</text>
<text transform="translate(486.11,157) scale(0.8100,1)" font-size="18.90" font-family="Liberation Sans" font-weight="normal" fill="#CFCFCF">S</text>
<text transform="translate(484.91,156) scale(0.8100,1)" font-size="18.90" font-family="Liberation Sans" font-weight="normal" fill="#9A9A9A">S</text>
<text transform="translate(512.44,156) scale(0.7748,1)" font-size="18.17" font-family="Liberation Sans" font-weight="normal" fill="#9A9A9A">ab</text>
<text transform="translate(541.30,151) scale(1.0272,1)" font-size="14.97" font-family="Liberation Sans" font-weight="normal" fill="#9A9A9A">AV</text>
<text transform="translate(589.40,156) scale(0.8384,1)" font-size="16.86" font-family="Liberation Sans" font-weight="normal" fill="#9A9A9A">A</text>
<text transform="translate(601.36,156) scale(0.7946,1)" font-size="16.86" font-family="Liberation Sans" font-weight="normal" fill="#9A9A9A">a</text>
<text transform="translate(808.75,104) scale(1.0122,1)" font-size="7.27" font-family="Liberation Sans" font-weight="normal" fill="#A6A6A6">1</text>
<text transform="translate(808.70,112) scale(1.0887,1)" font-size="7.27" font-family="Liberation Sans" font-weight="normal" fill="#A6A6A6">2</text>
<text transform="translate(808.80,120) scale(1.0429,1)" font-size="7.27" font-family="Liberation Sans" font-weight="normal" fill="#A6A6A6">3</text>
<text transform="translate(1634.19,126) scale(1.0514,1)" font-size="13.37" font-family="Liberation Sans" font-weight="bold" fill="#B146C2">b</text>
<text transform="translate(1639.61,137) scale(0.8628,1)" font-size="14.10" font-family="Liberation Sans" font-weight="bold" fill="#2B88D8">c</text>
<text transform="translate(1188.02,106) scale(0.9627,1)" font-size="11.63" font-family="Liberation Sans" font-weight="bold" fill="#2B88D8">A</text>
<text transform="translate(210.85,240) scale(0.9833,1)" font-size="3.92" font-family="Liberation Sans" font-weight="bold" fill="#3A3A3A">MagicSlides</text>
</svg>
</body></html>
